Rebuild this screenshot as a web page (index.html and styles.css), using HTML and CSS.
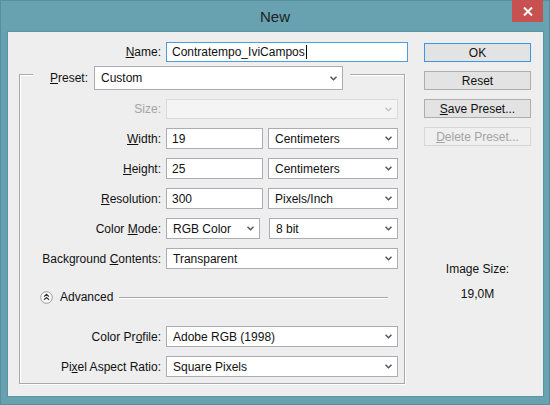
FILE: index.html
```html
<!DOCTYPE html>
<html lang="en">
<head>
    <meta charset="UTF-8">
    <title>New</title>
    <link rel="stylesheet" href="styles.css">
</head>
<body>

<div class="window">
    <div class="titlebar">
        <span class="title">New</span>
    </div>
    <button class="close" aria-label="Close">
        <svg width="10" height="9" viewBox="0 0 10 9"><path d="M1 0.5 L9 8.5 M9 0.5 L1 8.5" stroke="#fff" stroke-width="2"/></svg>
    </button>

    <div class="client">
        <!-- Left side: name and preset settings -->
        <div class="main">
            <div class="row name-row">
                <label class="label"><u>N</u>ame:</label>
                <div class="field focused">Contratempo_IviCampos<span class="caret"></span></div>
            </div>

            <div class="group">
                <div class="preset-row">
                    <label class="preset-label"><u>P</u>reset:</label>
                    <div class="select preset-select">
                        <span>Custom</span>
                        <svg class="chev" width="7" height="5" viewBox="0 0 7 5"><path d="M0.5 0.8 L3.5 3.8 L6.5 0.8" fill="none" stroke="#555" stroke-width="1.5"/></svg>
                    </div>
                </div>

                <div class="row size-row">
                    <label class="label disabled">Size:</label>
                    <div class="select disabled wide">
                        <span></span>
                        <svg class="chev" width="7" height="5" viewBox="0 0 7 5"><path d="M0.5 0.8 L3.5 3.8 L6.5 0.8" fill="none" stroke="#c4c4c4" stroke-width="1.5"/></svg>
                    </div>
                </div>

                <div class="row">
                    <label class="label"><u>W</u>idth:</label>
                    <div class="field num">19</div>
                    <div class="select unit">
                        <span>Centimeters</span>
                        <svg class="chev" width="7" height="5" viewBox="0 0 7 5"><path d="M0.5 0.8 L3.5 3.8 L6.5 0.8" fill="none" stroke="#555" stroke-width="1.5"/></svg>
                    </div>
                </div>

                <div class="row">
                    <label class="label"><u>H</u>eight:</label>
                    <div class="field num">25</div>
                    <div class="select unit">
                        <span>Centimeters</span>
                        <svg class="chev" width="7" height="5" viewBox="0 0 7 5"><path d="M0.5 0.8 L3.5 3.8 L6.5 0.8" fill="none" stroke="#555" stroke-width="1.5"/></svg>
                    </div>
                </div>

                <div class="row">
                    <label class="label"><u>R</u>esolution:</label>
                    <div class="field num">300</div>
                    <div class="select unit">
                        <span>Pixels/Inch</span>
                        <svg class="chev" width="7" height="5" viewBox="0 0 7 5"><path d="M0.5 0.8 L3.5 3.8 L6.5 0.8" fill="none" stroke="#555" stroke-width="1.5"/></svg>
                    </div>
                </div>

                <div class="row">
                    <label class="label">Color <u>M</u>ode:</label>
                    <div class="select mode">
                        <span>RGB Color</span>
                        <svg class="chev" width="7" height="5" viewBox="0 0 7 5"><path d="M0.5 0.8 L3.5 3.8 L6.5 0.8" fill="none" stroke="#555" stroke-width="1.5"/></svg>
                    </div>
                    <div class="select bits">
                        <span>8 bit</span>
                        <svg class="chev" width="7" height="5" viewBox="0 0 7 5"><path d="M0.5 0.8 L3.5 3.8 L6.5 0.8" fill="none" stroke="#555" stroke-width="1.5"/></svg>
                    </div>
                </div>

                <div class="row">
                    <label class="label">Background <u>C</u>ontents:</label>
                    <div class="select wide">
                        <span>Transparent</span>
                        <svg class="chev" width="7" height="5" viewBox="0 0 7 5"><path d="M0.5 0.8 L3.5 3.8 L6.5 0.8" fill="none" stroke="#555" stroke-width="1.5"/></svg>
                    </div>
                </div>

                <div class="advanced">
                    <svg class="adv-icon" width="13" height="13" viewBox="0 0 13 13">
                        <circle cx="6.5" cy="6.5" r="5.8" fill="#fbfbfb" stroke="#9a9a9a"/>
                        <path d="M4 5.6 L6.5 3.4 L9 5.6 M4 8.8 L6.5 6.6 L9 8.8" fill="none" stroke="#333" stroke-width="1.2"/>
                    </svg>
                    <span class="adv-text">Advanced</span>
                    <span class="adv-line"></span>
                </div>

                <div class="row profile-row">
                    <label class="label">Color Pr<u>o</u>file:</label>
                    <div class="select wide">
                        <span>Adobe RGB (1998)</span>
                        <svg class="chev" width="7" height="5" viewBox="0 0 7 5"><path d="M0.5 0.8 L3.5 3.8 L6.5 0.8" fill="none" stroke="#555" stroke-width="1.5"/></svg>
                    </div>
                </div>

                <div class="row">
                    <label class="label">Pi<u>x</u>el Aspect Ratio:</label>
                    <div class="select wide">
                        <span>Square Pixels</span>
                        <svg class="chev" width="7" height="5" viewBox="0 0 7 5"><path d="M0.5 0.8 L3.5 3.8 L6.5 0.8" fill="none" stroke="#555" stroke-width="1.5"/></svg>
                    </div>
                </div>
            </div>
        </div>

        <!-- Right side: buttons and image size -->
        <div class="side">
            <button class="btn default">OK</button>
            <button class="btn">Reset</button>
            <button class="btn"><u>S</u>ave Preset...</button>
            <button class="btn" disabled><u>D</u>elete Preset...</button>

            <div class="image-size">
                <p>Image Size:</p>
                <p class="size-value">19,0M</p>
            </div>
        </div>
    </div>
</div>

</body>
</html>
```

FILE: styles.css
```css
* {
    box-sizing: border-box;
}

body {
    margin: 0;
    font-family: "Liberation Sans", Arial, sans-serif;
    font-size: 12px;
    color: #111;
}

.window {
    position: relative;
    width: 550px;
    height: 405px;
    background-color: #68a1b0;
    border: 1px solid #588f9e;
    display: flex;
    flex-direction: column;
}

.titlebar {
    height: 30px;
    display: flex;
    align-items: center;
    justify-content: center;
}

.title {
    font-size: 15px;
    color: #222;
    margin-top: 1px;
}

.close {
    position: absolute;
    top: -1px;
    right: 6px;
    width: 31px;
    height: 22px;
    border: none;
    padding: 0;
    background-color: #c75050;
    display: flex;
    align-items: center;
    justify-content: center;
}

.client {
    flex: 1;
    margin: 0 5px 7px 6px;
    border: 1px solid #5c93a2;
    background-color: #eeeeee;
    display: flex;
}

.main {
    width: 389px;
    margin-left: 11px;
    padding-top: 10px;
}

/* form rows */
.row {
    display: flex;
    align-items: center;
    height: 21px;
    margin-top: 9px;
}

.label {
    width: 141px;
    margin-right: 5px;
    text-align: right;
    white-space: nowrap;
}

.label.disabled {
    color: #a3a3a3;
}

.name-row {
    margin-top: 0;
    height: 20px;
}

.name-row .label {
    width: 142px;
}

.field {
    height: 100%;
    background-color: #fff;
    border: 1px solid #abadb3;
    padding-left: 5px;
    display: flex;
    align-items: center;
    white-space: nowrap;
}

.field.focused {
    width: 242px;
    border-color: #4d9be0;
}

.caret {
    display: inline-block;
    width: 1px;
    height: 14px;
    background-color: #000;
    margin-left: 1px;
}

.field.num {
    width: 97px;
}

.select {
    height: 100%;
    background-color: #fff;
    border: 1px solid #abadb3;
    padding: 0 5px 0 6px;
    display: flex;
    align-items: center;
    justify-content: space-between;
    white-space: nowrap;
}

.select.disabled {
    background-color: #f4f4f4;
    border-color: #d9d9d9;
}

.wide {
    width: 232px;
}

.unit {
    width: 130px;
    margin-left: 5px;
}

.mode {
    width: 94px;
}

.bits {
    width: 129px;
    margin-left: 9px;
}

.chev {
    flex-shrink: 0;
}

/* group box with the preset row sitting on its border */
.group {
    width: 386px;
    margin-top: 12px;
    border: 1px solid #a9a9a9;
    box-shadow: 1px 1px 0 #fff, inset 1px 1px 0 #fff;
    padding-bottom: 6px;
}

.preset-row {
    display: flex;
    align-items: center;
    width: fit-content;
    height: 24px;
    margin: -9px 0 0 13px;
    padding-right: 7px;
    background-color: #eeeeee;
}

.preset-label {
    width: 55px;
    margin-right: 6px;
    text-align: right;
}

.preset-select {
    width: 249px;
    height: 24px;
    padding-left: 6px;
}

.size-row {
    height: 20px;
}

.advanced {
    display: flex;
    align-items: center;
    height: 14px;
    margin-top: 21px;
}

.adv-icon {
    margin-left: 20px;
}

.adv-text {
    margin-left: 7px;
}

.adv-line {
    flex: 1;
    height: 1px;
    margin: 1px 16px 0 6px;
    background-color: #a9a9a9;
    box-shadow: 0 1px 0 #fff;
}

.profile-row {
    margin-top: 22px;
}

/* buttons column */
.side {
    width: 107px;
    margin-left: 16px;
    padding-top: 11px;
    display: flex;
    flex-direction: column;
}

.btn {
    height: 19px;
    margin-bottom: 9px;
    padding: 0;
    font-family: inherit;
    font-size: 12px;
    color: #111;
    background-color: #e3e3e3;
    border: 1px solid #adadad;
}

.btn.default {
    border-color: #3d95e6;
}

.btn[disabled] {
    color: #a3a3a3;
    background-color: #efefef;
    border-color: #d6d6d6;
}

.image-size {
    margin-top: 107px;
    text-align: center;
}

.image-size p {
    margin: 0;
    line-height: 15px;
}

.size-value {
    margin-top: 10px !important;
}
```
